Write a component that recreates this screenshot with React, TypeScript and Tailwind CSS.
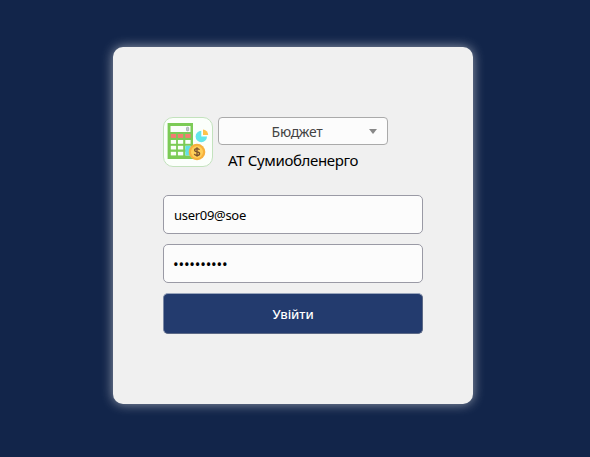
import React from "react";

function BudgetLogo() {
  return (
    <svg viewBox="0 0 50 50" className="h-[50px] w-[50px] shrink-0" aria-hidden="true">
      <rect x="0.5" y="0.5" width="49" height="49" rx="9.5" fill="#fbfffb" stroke="#c3e2bd" />
      <rect x="4.6" y="6" width="25.4" height="36" fill="#7bcb55" />
      <rect x="7.5" y="9" width="20" height="6" fill="#fafffa" />
      <rect x="23.5" y="10.2" width="2.2" height="3.7" rx="0.8" fill="#c3c9ce" stroke="#8d979f" strokeWidth="0.6" />
      {[7.8, 14.9, 22.3].map((x) => (
        <g key={x}>
          <rect x={x} y="17" width="5.3" height="3.9" fill="#f47c72" />
          <rect x={x} y="23" width="5.3" height="3.8" fill="#fafffa" />
          <rect x={x} y="28.8" width="5.3" height="3.7" fill="#fafffa" />
          <rect x={x} y="34.8" width="5.3" height="3.6" fill="#fafffa" />
        </g>
      ))}
      <rect x="22.3" y="28.8" width="5.3" height="9.6" fill="#63dfe3" />
      <path d="M38.3 13.8v5.700h5.700A5.700 5.700 0 1 1 38.300 13.800Z" fill="#63e6e9" />
      <path d="M40 12.4A5.6 5.6 0 0 1 45.2 18H40Z" fill="#ffc34a" />
      <circle cx="34" cy="35" r="8.3" fill="#f7b13c" />
      <circle cx="34" cy="35" r="6" fill="#ffd05a" />
      <path
        d="M36.4 32.9c-.3-1-1.2-1.3-2.4-1.3-1.4 0-2.4.6-2.4 1.7 0 2.5 5 .8 5 3.4 0 1.2-1.1 1.8-2.6 1.8-1.4 0-2.4-.5-2.7-1.6M34 30.3v9.5"
        fill="none"
        stroke="#77502d"
        strokeWidth="1.3"
      />
    </svg>
  );
}

export default function App() {
  return (
    <main className="flex h-[457px] w-[590px] items-start bg-[#12254a] pt-[47px] pl-[113px] font-['Noto_Sans','Open_Sans',sans-serif] text-black">
      <form
        className="flex h-[357px] w-[360px] flex-col rounded-[10px] bg-[#f0f0f0] px-[50px] pt-[70px] shadow-[0_0_12px_rgba(240,240,240,0.6)]"
        onSubmit={(e) => e.preventDefault()}
      >
        <div className="flex h-[50px] gap-[5px]">
          <BudgetLogo />
          <div className="flex flex-col">
            <button
              type="button"
              className="flex h-7 w-[170px] shrink-0 items-center rounded border border-[#aaaaaa] bg-[#fcfcfc] pr-[10px] pl-[6px] text-[#444444]"
            >
              <span className="flex-1 pt-[2px] text-center text-[14px] leading-[26px] tracking-[-0.3px]">Бюджет</span>
              <span className="h-0 w-0 border-x-4 border-t-5 border-x-transparent border-t-[#888888]" />
            </button>
            <span className="mt-1 pl-[10px] text-[15px] leading-[22px] tracking-[-0.35px] whitespace-nowrap">
              АТ Сумиобленерго
            </span>
          </div>
        </div>
        <input
          type="text"
          aria-label="Логін"
          defaultValue="user09@soe"
          className="mt-7 h-[39px] w-full rounded-[5px] border border-[#9a9aa5] bg-[#fcfcfc] px-[10px] text-[13px] tracking-[-0.3px] outline-none"
        />
        <div className="mt-[10px] flex h-[39px] w-full items-center overflow-hidden rounded-[5px] border border-[#9a9aa5] bg-[#fcfcfc] px-[9px] pt-[2px] text-[15px] tracking-[-0.2px]">
          ••••••••••
        </div>
        <button
          type="submit"
          className="mt-[10px] h-[41px] w-full rounded-[5px] border border-t-[#9aa6bd] border-r-[#5c6986] border-b-[#5c6986] border-l-[#7b89a6] bg-[#233b6e] pt-[2px] text-[13px] font-medium tracking-[-0.1px] text-white"
        >
          Увійти
        </button>
      </form>
    </main>
  );
}
